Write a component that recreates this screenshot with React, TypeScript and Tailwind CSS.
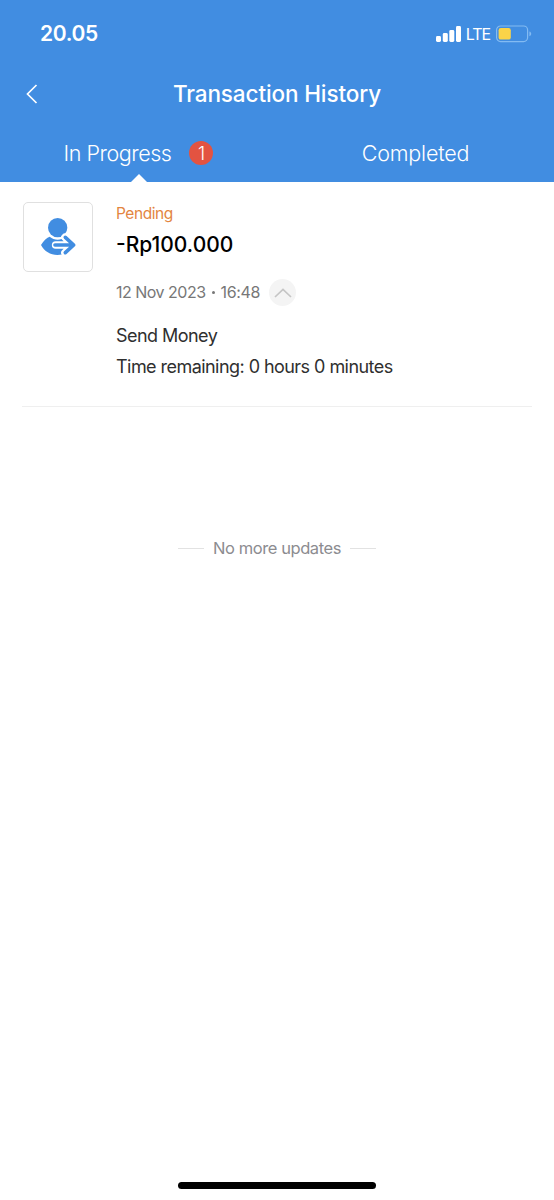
import React, { useState } from 'react';

function SignalIcon() {
  return (
    <svg width="26" height="16" viewBox="0 0 26 16" fill="white">
      <rect x="0" y="10" width="5" height="6" rx="1.4" />
      <rect x="6.8" y="7" width="5" height="9" rx="1.4" />
      <rect x="13.3" y="4" width="5" height="12" rx="1.4" />
      <rect x="20" y="0" width="5" height="16" rx="1.4" />
    </svg>
  );
}

function BatteryIcon() {
  return (
    <svg width="36" height="18" viewBox="0 0 36 18" fill="none">
      <rect x="0.6" y="1" width="31" height="15.6" rx="4" stroke="#83bbf2" strokeWidth="1.2" />
      <path d="M33.4 6.4c1.2.4 1.8 1.2 1.8 2.4s-.6 2-1.8 2.4z" fill="#83bbf2" />
      <rect x="2.6" y="3" width="12.2" height="11.6" rx="2.2" fill="#fad349" />
    </svg>
  );
}

function SendMoneyIcon() {
  return (
    <svg className="shrink-0" width="70" height="70" viewBox="0 0 210 210" fill="none">
      <circle cx="104" cy="77" r="29" fill="#418de1" />
      <path d="M54 129C62 115 72 107 80 104C94 116 114 116 127 104C136 108 146 118 152 129C142 148 125 159 103 159C82 159 64 148 54 129Z" fill="#418de1" />
      <path d="M98 129H147M126 106L150 129L126 152" stroke="white" strokeWidth="23" strokeLinejoin="round" strokeLinecap="round" />
      <path d="M96 129H149M127 106L152 129L127 152" stroke="#418de1" strokeWidth="11" strokeLinejoin="round" strokeLinecap="round" />
    </svg>
  );
}

function StatusBar() {
  return (
    <div className="flex h-[67px] items-center justify-between pl-10 pr-[22px]">
      <span className="text-[21px] font-semibold tracking-[-0.3px]">20.05</span>
      <div className="flex items-center">
        <SignalIcon />
        <span className="ml-1 mr-[6px] text-[16px] tracking-[-1.1px]">LTE</span>
        <BatteryIcon />
      </div>
    </div>
  );
}

export default function App() {
  const [tab, setTab] = useState('progress');
  const [expanded, setExpanded] = useState(true);

  return (
    <div className="flex h-[1200px] w-[554px] flex-col bg-white font-['Inter',sans-serif]">
      <header className="flex h-[182px] flex-col bg-[#418de1] text-white">
        <StatusBar />
        <div className="flex h-[54px] items-center px-6">
          <button aria-label="Back" className="w-6">
            <svg width="16" height="20" viewBox="0 0 16 20" fill="none" stroke="white" strokeWidth="1.7">
              <path d="M12.5 1L3.5 10L12.5 19" />
            </svg>
          </button>
          <h1 className="flex-1 pb-px pr-6 text-center text-[22.5px] font-medium tracking-[-0.12px]">Transaction History</h1>
        </div>
        <nav className="flex flex-1 text-[21.5px] font-light">
          <button onClick={() => setTab('progress')} className="relative flex flex-1 items-center justify-center gap-[18px] pt-[3px]">
            <span className="tracking-[-0.45px]">In Progress</span>
            <span className="flex h-6 w-6 items-center justify-center rounded-full bg-[#e35341] text-[18px]">1</span>
            {tab === 'progress' && (
              <svg className="absolute bottom-0 left-[131px]" width="16" height="8" viewBox="0 0 16 8" fill="white">
                <path d="M0 8L8 0L16 8Z" />
              </svg>
            )}
          </button>
          <button onClick={() => setTab('completed')} className="flex-1 pt-[3px] tracking-[-0.2px]">
            Completed
          </button>
        </nav>
      </header>

      <main className="flex-1 px-[22px] pt-5">
        <section className="flex h-[205px] border-b border-[#efefef]">
          <div className="ml-px flex h-[70px] w-[70px] items-center justify-center rounded-[5px] border-[1.5px] border-[#e0e0e0]">
            <SendMoneyIcon />
          </div>
          <div className="ml-[23px]">
            <p className="mt-px text-[15.5px] leading-[22px] tracking-[-0.45px] text-[#e3853f]">Pending</p>
            <p className="mt-1 text-[21px] font-medium leading-8 text-black">-Rp100.000</p>
            <div className="mt-[18px] flex h-[27px] items-center">
              <span className="flex items-center pb-px text-[16px] tracking-[-0.5px] text-[#777777]">
                12 Nov 2023
                <span className="ml-[6px] mr-[6px] h-[3px] w-[3px] rounded-full bg-[#777777]" />
                <span className="tracking-[-0.35px]">16:48</span>
              </span>
              <button
                aria-label="Details"
                onClick={() => setExpanded(!expanded)}
                className="ml-[9px] flex h-[27px] w-[27px] items-center justify-center rounded-full bg-[#f4f4f4]"
              >
                <svg width="18" height="10" viewBox="0 0 18 10" fill="none" stroke="#c5c5c5" strokeWidth="1.7">
                  <path d="M1 9L9 1.5L17 9" />
                </svg>
              </button>
            </div>
            {expanded && (
              <div className="mt-[14px] text-[18px] leading-[31px] tracking-[-0.55px] text-[#2f2f2f]">
                <p>Send Money</p>
                <p>Time remaining: 0 hours 0 minutes</p>
              </div>
            )}
          </div>
        </section>

        <div className="mt-[129px] flex items-center justify-center gap-[9px] text-[16.5px] text-[#8c8c90]">
          <span className="h-px w-[26px] bg-[#e2e2e2]" />
          <span className="tracking-[-0.42px]">No more updates</span>
          <span className="h-px w-[26px] bg-[#e2e2e2]" />
        </div>
      </main>

      <footer className="flex h-[21px] justify-center">
        <div className="mt-[3px] h-[7px] w-[198px] rounded-full bg-black" />
      </footer>
    </div>
  );
}
